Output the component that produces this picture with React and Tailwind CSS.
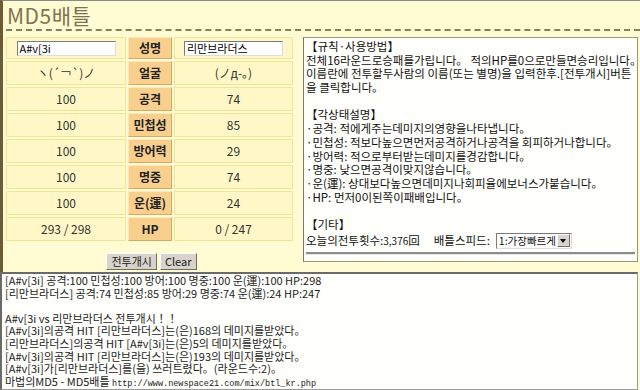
import React from 'react';

const FONT = { fontFamily: '"Noto Sans CJK KR", "Noto Sans", sans-serif' };

const rows = [
  { label: '공격', left: '100', right: '74' },
  { label: '민첩성', left: '100', right: '85' },
  { label: '방어력', left: '100', right: '29' },
  { label: '명중', left: '100', right: '74' },
  { label: '운(運)', left: '100', right: '24' },
  { label: 'HP', left: '293 / 298', right: '0 / 247' },
];

const ruleLines = [
  '【규칙·사용방법】',
  '전체16라운드로승패를가립니다。 적의HP를0으로만들면승리입니다。',
  '이름란에 전투할두사람의 이름(또는 별명)을 입력한후.[전투개시]버튼',
  '을 클릭합니다。',
  '',
  '【각상태설명】',
  '·공격: 적에게주는데미지의영향을나타냅니다。',
  '·민첩성: 적보다높으면먼저공격하거나공격을 회피하거나합니다。',
  '·방어력: 적으로부터받는데미지를경감합니다。',
  '·명중: 낮으면공격이맞지않습니다。',
  '·운(運): 상대보다높으면데미지나회피율에보너스가붙습니다。',
  '·HP: 먼저0이된쪽이패배입니다。',
  '',
  '【기타】',
];

const logLines = [
  '[A#v[3i] 공격:100 민첩성:100 방어:100 명중:100 운(運):100 HP:298',
  '[리만브라더스] 공격:74 민첩성:85 방어:29 명중:74 운(運):24 HP:247',
  '',
  'A#v[3i vs 리만브라더스 전투개시！！',
  '[A#v[3i]의공격 HIT [리만브라더스]는(은)168의 데미지를받았다。',
  '[리만브라더스]의공격 HIT [A#v[3i]는(은)5의 데미지를받았다。',
  '[A#v[3i]의공격 HIT [리만브라더스]는(은)193의 데미지를받았다。',
  '[A#v[3i]가[리만브라더스]를(을) 쓰러트렸다。(라운드수:2)。',
];

const Cell = ({ children }) => (
  <div className="flex items-center justify-center bg-[#fff8c6] border border-[#f4e394] text-[12px] text-[#333]">
    {children}
  </div>
);

const Label = ({ children }) => (
  <div className="flex items-center justify-center bg-[#f9cf8e] border border-t-[#fde7bd] border-l-[#fde7bd] border-b-[#d7a860] border-r-[#d7a860] text-[12px] font-bold text-[#222]">
    {children}
  </div>
);

const TextBox = ({ value }) => (
  <div className="w-[99px] h-[15px] bg-white border border-t-[#7a7a7a] border-l-[#7a7a7a] border-b-[#dcdcdc] border-r-[#dcdcdc] text-[11px] leading-[13px] px-[2px] text-black">
    {value}
  </div>
);

const Button = ({ children }) => (
  <div className="h-[17px] px-[4px] flex items-center bg-[#d8d4cc] border border-t-white border-l-white border-b-[#6e6e6e] border-r-[#6e6e6e] text-[11px] text-[#222]">
    {children}
  </div>
);

export default function App() {
  return (
    <div className="w-[640px] h-[390px] overflow-hidden bg-[#fffbd2] flex flex-col" style={FONT}>
      <div className="h-[272px] border-t border-t-[#8a8a8a] border-l-[3px] border-l-[#6e5a34] flex flex-col">
        <div className="h-[28px] pl-[4px] pt-[2px] text-[21px] leading-[24px] text-[#7f7252] tracking-[0.5px]">MD5배틀</div>
        <div className="ml-[3px] border-t-[2px] border-dashed border-[#8a7c5c]" />
        <div className="flex pt-[6px] pl-[3px]">
          <div className="w-[287px] flex flex-col">
            <div className="grid grid-cols-[120px_44px_119px] gap-[2px] grid-rows-[22px_24px_24px_24px_24px_24px_24px_24px]">
              <Cell><TextBox value="A#v[3i" /></Cell>
              <Label>성명</Label>
              <Cell><TextBox value="리만브라더스" /></Cell>
              <Cell>ヽ(´￢`)ノ</Cell>
              <Label>얼굴</Label>
              <Cell>(ノд-。)</Cell>
              {rows.map((r) => (
                <React.Fragment key={r.label}>
                  <Cell>{r.left}</Cell>
                  <Label>{r.label}</Label>
                  <Cell>{r.right}</Cell>
                </React.Fragment>
              ))}
            </div>
            <div className="flex justify-center gap-[3px] mt-[12px] pl-[4px]">
              <Button>전투개시</Button>
              <Button>Clear</Button>
            </div>
          </div>
          <div className="ml-[10px] w-[335px] h-[225px] bg-[#fffffb] border border-[#9c9672] border-l-[#77776a] px-[2px] pt-[2px] text-[11.5px] leading-[13.7px] text-[#111]">
            {ruleLines.map((l, i) => (
              <p key={i} className="h-[13.7px] whitespace-nowrap">{l}</p>
            ))}
            <div className="flex items-center h-[18px] whitespace-nowrap">
              <span>오늘의전투횟수:<span className="text-[10px]">3,376</span>回</span>
              <span className="ml-[14px]">배틀스피드:</span>
              <div className="ml-[6px] h-[16px] w-[76px] flex items-center bg-white border border-t-[#7a7a7a] border-l-[#7a7a7a] border-b-[#dcdcdc] border-r-[#dcdcdc] overflow-hidden">
                <span className="flex-1 pl-[2px] text-[10.5px] leading-[14px] whitespace-nowrap overflow-hidden">1:가장빠르게</span>
                <span className="shrink-0 w-[13px] h-[13px] mr-[1px] flex items-center justify-center bg-[#d8d4cc] border border-t-white border-l-white border-b-[#6e6e6e] border-r-[#6e6e6e]">
                  <span className="w-0 h-0 border-l-[3px] border-r-[3px] border-t-[4px] border-l-transparent border-r-transparent border-t-black" />
                </span>
              </div>
            </div>
            <div className="mt-[2px] border-t-[2px] border-t-[#8c8c8c] border-b border-b-[#e6e6e6]" />
          </div>
        </div>
      </div>
      <div className="flex-1 mr-[2px] bg-[#fffffc] border-t-[2px] border-t-[#6a6a6a] border-l-[2px] border-l-[#6a6a6a] border-b border-b-[#9a9a9a] border-r border-r-[#9a9a9a] pl-[3px] text-[11px] leading-[12.6px] text-[#222] overflow-hidden">
        {logLines.map((l, i) => (
          <div key={i} className="h-[12.6px] whitespace-nowrap">{l}</div>
        ))}
        <div className="h-[12.6px] whitespace-nowrap">
          마법의MD5 - MD5배틀 <span style={{ fontFamily: '"Liberation Mono", monospace' }} className="text-[8.5px]">http://www.newspace21.com/mix/btl_kr.php</span>
        </div>
      </div>
    </div>
  );
}
